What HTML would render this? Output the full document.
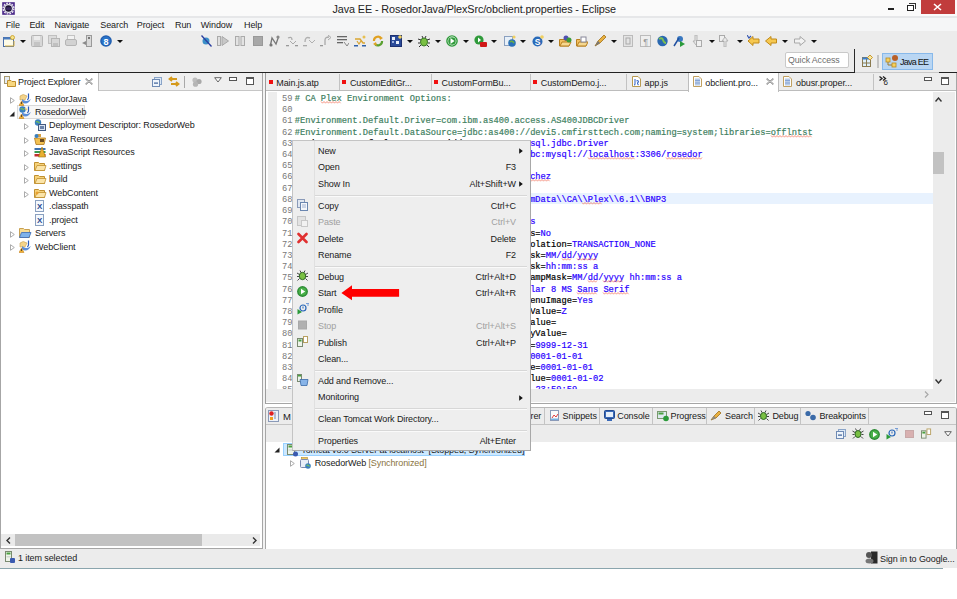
<!DOCTYPE html>
<html><head><meta charset="utf-8">
<style>
*{margin:0;padding:0;box-sizing:border-box}
html,body{width:957px;height:599px;overflow:hidden;background:#fff}
body{position:relative;font-family:"Liberation Sans",sans-serif;font-size:9px;letter-spacing:-0.1px;color:#1a1a1a}
.a{position:absolute}
.t{position:absolute;white-space:pre;line-height:1}
#title{left:0;top:0;width:957px;height:16px;background:#fafafa}
#menubar{left:0;top:16px;width:957px;height:15px;background:#f5f6f7}
#toolbar{left:0;top:31px;width:957px;height:41px;background:#ececec}
.code{font-family:"Liberation Mono",monospace;font-size:8.72px;letter-spacing:0;-webkit-text-stroke:0.2px}
</style></head><body>
<!-- TITLE -->
<div id="title" class="a">
  <svg class="a" style="left:1.5px;top:1.5px" width="13" height="13" viewBox="0 0 13 13"><rect x="0.2" y="0.2" width="12.6" height="12.6" fill="#4b2a8a"/><circle cx="6.5" cy="6.5" r="5.4" fill="none" stroke="#ecebf0" stroke-width="1.4" stroke-dasharray="1.8 1"/><circle cx="6.5" cy="6.5" r="4.5" fill="#ecebf0"/><circle cx="6.5" cy="6.5" r="3.3" fill="#1c1434"/><path d="M4.2 6H8.8M4.2 7.2H8.8" stroke="#6a4aa8" stroke-width="0.6"/></svg>
  <div class="t" style="left:332.5px;top:4px;font-size:10.8px;color:#222">Java EE - RosedorJava/PlexSrc/obclient.properties - Eclipse</div>
  <div class="a" style="left:888px;top:8px;width:6px;height:2px;background:#222"></div>
  <div class="a" style="left:909px;top:3px;width:7px;height:6px;border:1.5px solid #333;border-left:none;border-bottom:none"></div>
  <div class="a" style="left:907px;top:5px;width:7px;height:6px;border:1.5px solid #222;background:#fff"></div>
  <div class="a" style="left:921px;top:0;width:34px;height:14px;background:#c13c3c"></div>
  <svg class="a" style="left:933px;top:3px" width="9" height="8"><path d="M1 1L8 7M8 1L1 7" stroke="#fff" stroke-width="1.6"/></svg>
</div>
<div class="a" style="left:0;top:16px;width:957px;height:1.5px;background:#e6e7e9;z-index:2"></div>
<!-- MENUBAR -->
<div id="menubar" class="a">
  <div class="t" style="left:5.7px;top:5px">File</div>
  <div class="t" style="left:29.4px;top:5px">Edit</div>
  <div class="t" style="left:54.5px;top:5px">Navigate</div>
  <div class="t" style="left:100.3px;top:5px">Search</div>
  <div class="t" style="left:136.8px;top:5px">Project</div>
  <div class="t" style="left:175px;top:5px">Run</div>
  <div class="t" style="left:200.7px;top:5px">Window</div>
  <div class="t" style="left:244px;top:5px">Help</div>
</div>
<!-- TOOLBAR -->
<div id="toolbar" class="a"></div>
<svg class="a" style="left:3px;top:35px" width="12" height="12" viewBox="0 0 12 12"><rect x="0.5" y="2.5" width="10" height="9" fill="#fdfbe8" stroke="#4a6ea8"/><rect x="0.5" y="2.5" width="10" height="2" fill="#4a7cc0"/><path d="M2 11H11V6" stroke="#d8b040" fill="none"/><circle cx="9.5" cy="2.5" r="2" fill="#f6e48a" stroke="#c89a20" stroke-width="0.8"/></svg>
<div class="a" style="left:20px;top:40px;width:0;height:0;border-left:3px solid transparent;border-right:3px solid transparent;border-top:3px solid #111"></div>
<svg class="a" style="left:31px;top:35px" width="12" height="12" viewBox="0 0 12 12"><rect x="0.5" y="0.5" width="11" height="11" rx="1" fill="#d7d7d7" stroke="#b5b5b5"/><rect x="3" y="1" width="6" height="4" fill="#ececec"/><rect x="3" y="7" width="6" height="4" fill="#c4c4c4"/></svg>
<svg class="a" style="left:48px;top:35px" width="12" height="12" viewBox="0 0 12 12"><rect x="0.5" y="0.5" width="8" height="8" fill="#dcdcdc" stroke="#c0c0c0"/><rect x="3.5" y="3.5" width="8" height="8" fill="#d7d7d7" stroke="#b5b5b5"/><rect x="5" y="8" width="5" height="3" fill="#c0c0c0"/></svg>
<svg class="a" style="left:65px;top:35px" width="12" height="12" viewBox="0 0 12 12"><rect x="2.5" y="0.5" width="7" height="5" fill="#f2f2f2" stroke="#c3c3c3"/><rect x="0.5" y="4.5" width="11" height="6" rx="1.5" fill="#d2d2d2" stroke="#b5b5b5"/></svg>
<svg class="a" style="left:82px;top:35px" width="10" height="12" viewBox="0 0 10 12"><rect x="4.5" y="0.5" width="5" height="11" fill="#d9d9d9" stroke="#9a9a9a"/><path d="M0 8L4 6V10Z" fill="#8a8a8a"/><rect x="6" y="2" width="2" height="2" fill="#777"/></svg>
<svg class="a" style="left:100px;top:35px" width="12" height="12" viewBox="0 0 12 12"><circle cx="6" cy="6" r="5.8" fill="#1f5cad"/><circle cx="6" cy="6" r="4.5" fill="#2a73c8"/><text x="6" y="9.5" font-size="9" text-anchor="middle" fill="#fff" font-family="Liberation Sans" font-weight="bold">8</text></svg>
<div class="a" style="left:117px;top:40px;width:0;height:0;border-left:3px solid transparent;border-right:3px solid transparent;border-top:3px solid #111"></div>
<svg class="a" style="left:201px;top:35px" width="11" height="12" viewBox="0 0 11 12"><circle cx="5" cy="6" r="3.5" fill="#3a8fc8"/><path d="M0.5 0.5L10.5 11.5" stroke="#2a3ea0" stroke-width="1.3"/></svg>
<svg class="a" style="left:217px;top:35px" width="12" height="12" viewBox="0 0 12 12"><rect x="0.5" y="1.5" width="3" height="9" fill="#e0e0e0" stroke="#aaa"/><path d="M5 1.5L11.5 6L5 10.5Z" fill="#c8c8c8" stroke="#a8a8a8"/></svg>
<svg class="a" style="left:235px;top:35px" width="10" height="12" viewBox="0 0 10 12"><rect x="0.5" y="1.5" width="3.5" height="9" fill="#e3e3e3" stroke="#aaa"/><rect x="6" y="1.5" width="3.5" height="9" fill="#e3e3e3" stroke="#aaa"/></svg>
<svg class="a" style="left:253px;top:35px" width="10" height="12" viewBox="0 0 10 12"><rect x="0.5" y="1.5" width="9" height="9" fill="#a8a8a8" stroke="#999"/></svg>
<svg class="a" style="left:269px;top:35px" width="11" height="12" viewBox="0 0 11 12"><path d="M1.5 10L3 3L7 9L9.5 2" stroke="#777" stroke-width="1.3" fill="none"/><circle cx="2" cy="10" r="1.6" fill="#777"/><circle cx="9" cy="2" r="1.6" fill="#888"/></svg>
<svg class="a" style="left:286px;top:35px" width="12" height="12" viewBox="0 0 12 12"><path d="M2 3Q6 1 6 5" stroke="#aaa" fill="none" stroke-width="1.2"/><path d="M4 6L7 9L10 6" stroke="#aaa" fill="none"/><rect x="0" y="10" width="3" height="1.3" fill="#999"/><rect x="9" y="10" width="3" height="1.3" fill="#999"/></svg>
<svg class="a" style="left:303px;top:35px" width="12" height="12" viewBox="0 0 12 12"><path d="M2 7Q2 1 7 3" stroke="#b0b0b0" fill="none" stroke-width="1.4"/><path d="M6 5L9 8L12 5" stroke="#b0b0b0" fill="none"/><rect x="0" y="10" width="4" height="1.3" fill="#aaa"/></svg>
<svg class="a" style="left:320px;top:35px" width="12" height="12" viewBox="0 0 12 12"><rect x="0" y="10" width="3" height="1.3" fill="#999"/><path d="M5 10V5Q5 2 9 2" stroke="#aaa" fill="none" stroke-width="1.3"/><path d="M8 0L11 2.5L8 5" stroke="#aaa" fill="none"/></svg>
<svg class="a" style="left:337px;top:35px" width="12" height="12" viewBox="0 0 12 12"><rect x="0" y="1" width="10" height="1.3" fill="#666"/><rect x="0" y="4" width="10" height="1.3" fill="#666"/><rect x="0" y="7" width="6" height="1.3" fill="#666"/><path d="M7 7L10 11L12 8" stroke="#888" fill="none"/></svg>
<svg class="a" style="left:354px;top:35px" width="12" height="12" viewBox="0 0 12 12"><path d="M1 4H6L9 8H11" stroke="#d9a530" fill="none" stroke-width="1.4"/><path d="M3 6L5 9L7 6" stroke="#d9a530" fill="none" stroke-width="1.2"/><rect x="0" y="10" width="4" height="1.5" fill="#3060a8"/><rect x="8" y="10" width="4" height="1.5" fill="#3060a8"/><circle cx="10" cy="2" r="1.5" fill="#e8c050"/></svg>
<svg class="a" style="left:372px;top:35px" width="12" height="12" viewBox="0 0 12 12"><path d="M2 6A4 4 0 0 1 9 3" stroke="#e0a020" stroke-width="2.2" fill="none"/><path d="M10 6A4 4 0 0 1 3 9" stroke="#5aa030" stroke-width="2.2" fill="none"/><path d="M7 1L11 3L8 5Z" fill="#e0a020"/><path d="M5 11L1 9L4 7Z" fill="#e0a020"/></svg>
<svg class="a" style="left:390px;top:35px" width="12" height="12" viewBox="0 0 12 12"><rect x="0.5" y="0.5" width="11" height="11" fill="#2a4a98" stroke="#1c3070"/><rect x="2" y="2" width="3" height="3" fill="#e8eef8"/><rect x="6" y="6" width="3" height="3" fill="#e8eef8"/><rect x="2" y="6" width="2" height="2" fill="#9ab0e0"/><circle cx="10" cy="2" r="1.8" fill="#f0d060"/></svg>
<div class="a" style="left:407px;top:40px;width:0;height:0;border-left:3px solid transparent;border-right:3px solid transparent;border-top:3px solid #111"></div>
<svg class="a" style="left:418px;top:35px" width="12" height="12" viewBox="0 0 12 12"><ellipse cx="6" cy="7" rx="3.5" ry="4" fill="#7ac043" stroke="#3a7a28"/><path d="M0 4L3 5M12 4L9 5M0 8H2M12 8H10M1 12L3 10M11 12L9 10M4 1L5 3M8 1L7 3" stroke="#333" stroke-width="1"/></svg>
<div class="a" style="left:435px;top:40px;width:0;height:0;border-left:3px solid transparent;border-right:3px solid transparent;border-top:3px solid #111"></div>
<svg class="a" style="left:446px;top:35px" width="12" height="12" viewBox="0 0 12 12"><circle cx="6" cy="6" r="5.8" fill="#2f9a3a"/><circle cx="6" cy="6" r="4.4" fill="#fff"/><circle cx="6" cy="6" r="3.8" fill="#2f9a3a"/><path d="M4.5 3L8.5 6L4.5 9Z" fill="#fff"/></svg>
<div class="a" style="left:463px;top:40px;width:0;height:0;border-left:3px solid transparent;border-right:3px solid transparent;border-top:3px solid #111"></div>
<svg class="a" style="left:474px;top:35px" width="13" height="12" viewBox="0 0 13 12"><circle cx="5" cy="5" r="4.6" fill="#2f9a3a"/><path d="M4 2.5L7 5L4 7.5Z" fill="#fff"/><rect x="6" y="7" width="7" height="5" rx="1" fill="#d01818"/></svg>
<div class="a" style="left:491px;top:40px;width:0;height:0;border-left:3px solid transparent;border-right:3px solid transparent;border-top:3px solid #111"></div>
<svg class="a" style="left:504px;top:35px" width="12" height="12" viewBox="0 0 12 12"><rect x="0.5" y="1.5" width="8" height="9" fill="#e8f0f8" stroke="#8aa0c0"/><circle cx="8" cy="8" r="3.8" fill="#2a70b8"/><path d="M6 7Q8 5 10 8" stroke="#6ab040" stroke-width="1.5" fill="none"/><circle cx="10" cy="2" r="1.6" fill="#f0d060"/></svg>
<div class="a" style="left:520px;top:40px;width:0;height:0;border-left:3px solid transparent;border-right:3px solid transparent;border-top:3px solid #111"></div>
<svg class="a" style="left:532px;top:35px" width="12" height="12" viewBox="0 0 12 12"><circle cx="5.5" cy="6.5" r="5" fill="#2a6ab8"/><text x="5.5" y="9.8" font-size="8.5" text-anchor="middle" fill="#fff" font-family="Liberation Sans" font-weight="bold">S</text><circle cx="10" cy="2" r="1.8" fill="#f0d060"/></svg>
<div class="a" style="left:548px;top:40px;width:0;height:0;border-left:3px solid transparent;border-right:3px solid transparent;border-top:3px solid #111"></div>
<svg class="a" style="left:559px;top:35px" width="13" height="12" viewBox="0 0 13 12"><path d="M0.5 4.5H5L6 5.5H10V11H0.5Z" fill="#f2c060" stroke="#b88020"/><path d="M1 11L3 7H12L10 11Z" fill="#f6d890" stroke="#b88020"/><circle cx="7" cy="3" r="2.5" fill="#5050b0"/><circle cx="10" cy="5" r="2.5" fill="#3a9a3a"/></svg>
<svg class="a" style="left:576px;top:35px" width="12" height="12" viewBox="0 0 12 12"><path d="M0.5 4.5H4L5 5.5H10V11H0.5Z" fill="#f2c060" stroke="#b88020"/><path d="M1 11L3 7H12L10 11Z" fill="#f6d890" stroke="#b88020"/><rect x="5" y="2" width="5" height="5" fill="#fff" stroke="#889"/></svg>
<svg class="a" style="left:594px;top:35px" width="12" height="12" viewBox="0 0 12 12"><path d="M1 11L4 6L10 0L12 2L6 8Z" fill="#e8b040" stroke="#a07018" stroke-width="0.8"/><path d="M1 11L4 6L6 8Z" fill="#777"/></svg>
<div class="a" style="left:611px;top:40px;width:0;height:0;border-left:3px solid transparent;border-right:3px solid transparent;border-top:3px solid #111"></div>
<svg class="a" style="left:623px;top:35px" width="10" height="12" viewBox="0 0 10 12"><rect x="0.5" y="0.5" width="9" height="11" fill="#e4e4e4" stroke="#bbb"/><rect x="3" y="3" width="4" height="6" fill="none" stroke="#aaa"/></svg>
<svg class="a" style="left:640px;top:35px" width="11" height="12" viewBox="0 0 11 12"><rect x="0.5" y="0.5" width="10" height="11" fill="#eee" stroke="#bbb"/><text x="5.5" y="9.5" font-size="9" text-anchor="middle" fill="#999" font-family="Liberation Sans">¶</text></svg>
<svg class="a" style="left:657px;top:35px" width="11" height="12" viewBox="0 0 11 12"><circle cx="5.5" cy="6" r="5.2" fill="#2a68b0"/><path d="M2 4Q5 2 6 5T9 8" stroke="#7cc050" stroke-width="2" fill="none"/></svg>
<svg class="a" style="left:673px;top:35px" width="13" height="12" viewBox="0 0 13 12"><circle cx="7" cy="4" r="3" fill="#3a78c0"/><path d="M1 11L6 3" stroke="#2050a0" stroke-width="1.5"/><path d="M7 6L12 9L7 12Z" fill="#2a9a3a"/></svg>
<svg class="a" style="left:691px;top:35px" width="11" height="12" viewBox="0 0 11 12"><path d="M4 0V6H2L5 10L8 6H6V0Z" fill="#e8e8e8" stroke="#aaa" stroke-width="0.8"/><rect x="5.5" y="5.5" width="5" height="6" fill="#f0f0f0" stroke="#aaa"/></svg>
<div class="a" style="left:709px;top:40px;width:0;height:0;border-left:3px solid transparent;border-right:3px solid transparent;border-top:3px solid #111"></div>
<svg class="a" style="left:719px;top:35px" width="11" height="12" viewBox="0 0 11 12"><rect x="0.5" y="0.5" width="5" height="6" fill="#f0f0f0" stroke="#aaa"/><path d="M5 12V6H3L6 2L9 6H7V12Z" fill="#e8e8e8" stroke="#aaa" stroke-width="0.8"/></svg>
<div class="a" style="left:737px;top:40px;width:0;height:0;border-left:3px solid transparent;border-right:3px solid transparent;border-top:3px solid #111"></div>
<svg class="a" style="left:747px;top:35px" width="13" height="12" viewBox="0 0 13 12"><path d="M1 6L6 1.5V4H12V8H6V10.5Z" fill="#f6c850" stroke="#c08a18"/><path d="M0 0L2 3L4 1" stroke="#3a5ab0" stroke-width="1.2" fill="none"/></svg>
<svg class="a" style="left:765px;top:35px" width="12" height="12" viewBox="0 0 12 12"><path d="M0.5 6L6 1.5V4H11.5V8H6V10.5Z" fill="#f6c850" stroke="#c08a18"/></svg>
<div class="a" style="left:782px;top:40px;width:0;height:0;border-left:3px solid transparent;border-right:3px solid transparent;border-top:3px solid #111"></div>
<svg class="a" style="left:794px;top:35px" width="12" height="12" viewBox="0 0 12 12"><path d="M11.5 6L6 1.5V4H0.5V8H6V10.5Z" fill="#f2f2f2" stroke="#a8a8a8"/></svg>
<div class="a" style="left:811px;top:40px;width:0;height:0;border-left:3px solid transparent;border-right:3px solid transparent;border-top:3px solid #111"></div>
<div class="a" style="left:785px;top:52px;width:64px;height:16px;background:#fff;border:1px solid #c9c9c9;border-radius:2px"></div>
<div class="t" style="left:788px;top:56px;color:#6d6d6d;font-size:8.8px">Quick Access</div>
<div class="a" style="left:854px;top:49px;width:1.3px;height:24px;background:#2a2a2a"></div>
<svg class="a" style="left:862px;top:55px" width="11" height="12" viewBox="0 0 11 12"><rect x="0.5" y="2.5" width="8" height="9" fill="#dff0fa" stroke="#8a7a50"/><rect x="0.5" y="2.5" width="8" height="2" fill="#3a80d0"/><path d="M4.5 4V11.5M0.5 8H8.5" stroke="#8a7a50"/><path d="M8 0L10.5 2.5L8 5L5.5 2.5Z" fill="#f8e8a0" stroke="#c89830"/></svg>
<div class="a" style="left:877px;top:55px;width:2px;height:13px;background:#c4c4c4"></div>
<div class="a" style="left:882px;top:53px;width:51px;height:17px;background:#b9d6f3;border:1px solid #88b9ea"></div>
<svg class="a" style="left:885px;top:55px" width="14" height="13" viewBox="0 0 14 13"><rect x="1" y="3" width="4" height="4" fill="#f5d060" stroke="#b88a20" stroke-width="0.8"/><rect x="7" y="8" width="4" height="4" fill="#f5d060" stroke="#b88a20" stroke-width="0.8"/><path d="M3 7V10H7" stroke="#9a7a30" fill="none"/><circle cx="10" cy="3" r="3" fill="#b8602a"/></svg>
<div class="t" style="left:900px;top:57.5px;color:#111;letter-spacing:-0.75px;font-size:9px">Java EE</div>

<div class="a" style="left:0;top:73px;width:263px;height:476px;background:#fff;border-left:1px solid #a6a6a6;border-right:1px solid #a6a6a6;border-bottom:1px solid #a6a6a6"></div>
<div class="a" style="left:1px;top:73px;width:261px;height:18px;background:#efefef;border-bottom:1px solid #c6c6c6"></div>
<div class="a" style="left:1px;top:73px;width:98px;height:18px;background:#fff;border-right:1px solid #bdbdbd"></div>
<svg class="a" style="left:4px;top:76px" width="12" height="11" viewBox="0 0 12 11"><rect x="0.5" y="0.5" width="5" height="7" fill="#e6ecf5" stroke="#a89a70"/><path d="M3.5 4.5H7L8 5.5H11.5V10.5H3.5Z" fill="#f8d880" stroke="#c09030"/></svg>
<div class="t" style="left:18px;top:78px">Project Explorer</div>
<svg class="a" style="left:85px;top:78px" width="8" height="7" viewBox="0 0 8 7"><path d="M1 0.5L4 3L7 0.5L7.5 1L5 3.5L7.5 6L7 6.5L4 4L1 6.5L0.5 6L3 3.5L0.5 1Z" fill="none" stroke="#777" stroke-width="0.8"/></svg>
<svg class="a" style="left:152px;top:77px" width="10" height="10" viewBox="0 0 10 10"><rect x="2.5" y="0.5" width="7" height="7" fill="#dbe8f6" stroke="#8aa4c8"/><rect x="0.5" y="2.5" width="7" height="7" fill="#eef4fb" stroke="#6e8ab4"/><rect x="2" y="5.5" width="4" height="1.2" fill="#3b5f98"/></svg>
<svg class="a" style="left:168px;top:76px" width="12" height="11" viewBox="0 0 12 11"><path d="M9 3H2M4 1L1.5 3L4 5" stroke="#d59a1c" stroke-width="1.8" fill="none"/><path d="M3 8H10M8 6L10.5 8L8 10" stroke="#d59a1c" stroke-width="1.8" fill="none"/></svg>
<div class="a" style="left:184px;top:76px;width:1px;height:12px;background:#a8a8a8"></div>
<svg class="a" style="left:192px;top:77px" width="10" height="10" viewBox="0 0 10 10"><circle cx="3" cy="3" r="2.6" fill="#bdbdbd"/><circle cx="7" cy="4.5" r="2.6" fill="#a9a9a9"/><circle cx="3.5" cy="7.2" r="2.6" fill="#b5b5b5"/></svg>
<svg class="a" style="left:214px;top:77px" width="8" height="6" viewBox="0 0 8 6"><path d="M0.7 0.7H7.3L4 5Z" fill="#fff" stroke="#555" stroke-width="0.9"/></svg>
<div class="a" style="left:229px;top:77px;width:8px;height:3.5px;border:1px solid #555;background:#fff"></div>
<div class="a" style="left:246px;top:77px;width:8px;height:8px;border:1px solid #555;border-top-width:2px;background:#fff"></div>
<div class="a" style="left:17px;top:105px;width:68px;height:14px;border:1px solid #d9d9d9;background:#f7f7f7"></div>
<svg class="a" style="left:10px;top:96.50px" width="5" height="7" viewBox="0 0 5 7"><path d="M0.5 0.7L4.3 3.5L0.5 6.3Z" fill="#fff" stroke="#a2a2a2" stroke-width="0.9"/></svg>
<svg class="a" style="left:19.0px;top:92.50px" width="13" height="13" viewBox="0 0 13 13"><path d="M1 3Q4 0 8 3L6 7H1Z" fill="#f4d48a" stroke="#c8a050" stroke-width="0.6"/><path d="M3 6Q7 10 12 6L10 9Q6 12 3 9Z" fill="#5d8fd8"/><path d="M9.5 0.5V5Q9.5 6.5 8 6.5" stroke="#2a5ab8" stroke-width="1.2" fill="none"/><path d="M2.5 8L5 12.5H0Z" fill="#f0b030" stroke="#c07810" stroke-width="0.5"/><rect x="2.1" y="9" width="0.8" height="2" fill="#333"/></svg>
<div class="t" style="left:35px;top:94.55px">RosedorJava</div>
<svg class="a" style="left:9px;top:110.95px" width="6" height="6" viewBox="0 0 6 6"><path d="M5.5 0.5V5.5H0.5Z" fill="#222"/></svg>
<svg class="a" style="left:19.0px;top:105.95px" width="13" height="13" viewBox="0 0 13 13"><circle cx="3.5" cy="3.5" r="3.2" fill="#3a80c0"/><path d="M1.5 3Q3 2 5 4" stroke="#7ac050" stroke-width="1.3" fill="none"/><path d="M3 6Q7 10 12 6L10 9Q6 12 3 9Z" fill="#5d8fd8"/><path d="M9.5 0.5V5Q9.5 6.5 8 6.5" stroke="#2a5ab8" stroke-width="1.2" fill="none"/><path d="M6 2L8 4" stroke="#f0d070" stroke-width="1.5"/><path d="M2.5 8L5 12.5H0Z" fill="#f0b030" stroke="#c07810" stroke-width="0.5"/><rect x="2.1" y="9" width="0.8" height="2" fill="#333"/></svg>
<div class="t" style="left:35px;top:108.00px">RosedorWeb</div>
<svg class="a" style="left:24px;top:123.40px" width="5" height="7" viewBox="0 0 5 7"><path d="M0.5 0.7L4.3 3.5L0.5 6.3Z" fill="#fff" stroke="#a2a2a2" stroke-width="0.9"/></svg>
<svg class="a" style="left:33.5px;top:119.40px" width="13" height="13" viewBox="0 0 13 13"><circle cx="4" cy="3.5" r="3.2" fill="#3a80c0"/><path d="M2 3Q3.5 2 5.5 4" stroke="#7ac050" stroke-width="1.3" fill="none"/><rect x="4.5" y="5.5" width="7" height="6" fill="#d8e4f4" stroke="#445a80"/><rect x="6" y="7" width="4" height="3" fill="#6a82aa"/></svg>
<div class="t" style="left:49px;top:121.45px">Deployment Descriptor: RosedorWeb</div>
<svg class="a" style="left:24px;top:136.85px" width="5" height="7" viewBox="0 0 5 7"><path d="M0.5 0.7L4.3 3.5L0.5 6.3Z" fill="#fff" stroke="#a2a2a2" stroke-width="0.9"/></svg>
<svg class="a" style="left:33.5px;top:132.85px" width="13" height="13" viewBox="0 0 13 13"><rect x="3" y="1" width="4" height="3" fill="#d8a040"/><path d="M0.5 5H11.5L10 11.5H2Z" fill="#f2c050" stroke="#b07820" stroke-width="0.8"/><rect x="6" y="6" width="4" height="3" fill="#6a4a20"/><circle cx="2.5" cy="3" r="2" fill="#3a80c0"/></svg>
<div class="t" style="left:49px;top:134.90px">Java Resources</div>
<svg class="a" style="left:24px;top:150.30px" width="5" height="7" viewBox="0 0 5 7"><path d="M0.5 0.7L4.3 3.5L0.5 6.3Z" fill="#fff" stroke="#a2a2a2" stroke-width="0.9"/></svg>
<svg class="a" style="left:33.5px;top:146.30px" width="13" height="13" viewBox="0 0 13 13"><rect x="0.5" y="2" width="11" height="2" fill="#3a70b0"/><rect x="0.5" y="5" width="11" height="2" fill="#3a9a50"/><rect x="0.5" y="8" width="11" height="2.5" fill="#c03030"/><path d="M8 1L11.5 11H4.5Z" fill="#e8b030" stroke="#a07010" stroke-width="0.6"/></svg>
<div class="t" style="left:49px;top:148.35px">JavaScript Resources</div>
<svg class="a" style="left:24px;top:163.75px" width="5" height="7" viewBox="0 0 5 7"><path d="M0.5 0.7L4.3 3.5L0.5 6.3Z" fill="#fff" stroke="#a2a2a2" stroke-width="0.9"/></svg>
<svg class="a" style="left:33.5px;top:159.75px" width="13" height="13" viewBox="0 0 13 13"><path d="M0.5 2.5H4.5L5.5 3.5H10.5V10.5H0.5Z" fill="#f6d27a" stroke="#c09030"/><path d="M1 10.5L3 5.5H12L10.5 10.5Z" fill="#fbe4a8" stroke="#c09030" stroke-width="0.8"/></svg>
<div class="t" style="left:49px;top:161.80px">.settings</div>
<svg class="a" style="left:24px;top:177.20px" width="5" height="7" viewBox="0 0 5 7"><path d="M0.5 0.7L4.3 3.5L0.5 6.3Z" fill="#fff" stroke="#a2a2a2" stroke-width="0.9"/></svg>
<svg class="a" style="left:33.5px;top:173.20px" width="13" height="13" viewBox="0 0 13 13"><path d="M0.5 2.5H4.5L5.5 3.5H10.5V10.5H0.5Z" fill="#f6d27a" stroke="#c09030"/><path d="M1 10.5L3 5.5H12L10.5 10.5Z" fill="#fbe4a8" stroke="#c09030" stroke-width="0.8"/></svg>
<div class="t" style="left:49px;top:175.25px">build</div>
<svg class="a" style="left:24px;top:190.65px" width="5" height="7" viewBox="0 0 5 7"><path d="M0.5 0.7L4.3 3.5L0.5 6.3Z" fill="#fff" stroke="#a2a2a2" stroke-width="0.9"/></svg>
<svg class="a" style="left:33.5px;top:186.65px" width="13" height="13" viewBox="0 0 13 13"><path d="M0.5 2.5H4.5L5.5 3.5H10.5V10.5H0.5Z" fill="#f6d27a" stroke="#c09030"/><path d="M1 10.5L3 5.5H12L10.5 10.5Z" fill="#fbe4a8" stroke="#c09030" stroke-width="0.8"/><circle cx="3" cy="6" r="1.5" fill="#e8a030"/></svg>
<div class="t" style="left:49px;top:188.70px">WebContent</div>
<svg class="a" style="left:33.5px;top:200.10px" width="13" height="13" viewBox="0 0 13 13"><rect x="1.5" y="0.5" width="8" height="11" fill="#f4f8fc" stroke="#8aa0c0"/><text x="5.5" y="9" font-size="8" text-anchor="middle" fill="#2a4a90" font-family="Liberation Sans" font-weight="bold">X</text></svg>
<div class="t" style="left:49px;top:202.15px">.classpath</div>
<svg class="a" style="left:33.5px;top:213.55px" width="13" height="13" viewBox="0 0 13 13"><rect x="1.5" y="0.5" width="8" height="11" fill="#f4f8fc" stroke="#8aa0c0"/><text x="5.5" y="9" font-size="8" text-anchor="middle" fill="#2a4a90" font-family="Liberation Sans" font-weight="bold">X</text></svg>
<div class="t" style="left:49px;top:215.60px">.project</div>
<svg class="a" style="left:10px;top:231.00px" width="5" height="7" viewBox="0 0 5 7"><path d="M0.5 0.7L4.3 3.5L0.5 6.3Z" fill="#fff" stroke="#a2a2a2" stroke-width="0.9"/></svg>
<svg class="a" style="left:19.0px;top:227.00px" width="13" height="13" viewBox="0 0 13 13"><path d="M0.5 1.5H4.5L5.5 2.5H10.5V10.5H0.5Z" fill="#f8dc94" stroke="#c8a050"/><path d="M0.5 10.5L2.5 5.5H12L10 10.5Z" fill="#7fb2ea" stroke="#3a6ab8" stroke-width="0.8"/></svg>
<div class="t" style="left:35px;top:229.05px">Servers</div>
<svg class="a" style="left:10px;top:244.45px" width="5" height="7" viewBox="0 0 5 7"><path d="M0.5 0.7L4.3 3.5L0.5 6.3Z" fill="#fff" stroke="#a2a2a2" stroke-width="0.9"/></svg>
<svg class="a" style="left:19.0px;top:240.45px" width="13" height="13" viewBox="0 0 13 13"><path d="M1 3Q4 0 8 3L6 7H1Z" fill="#f4d48a" stroke="#c8a050" stroke-width="0.6"/><path d="M3 6Q7 10 12 6L10 9Q6 12 3 9Z" fill="#5d8fd8"/><path d="M9.5 0.5V5Q9.5 6.5 8 6.5" stroke="#2a5ab8" stroke-width="1.2" fill="none"/><path d="M2.5 8L5 12.5H0Z" fill="#f0b030" stroke="#c07810" stroke-width="0.5"/><rect x="2.1" y="9" width="0.8" height="2" fill="#333"/></svg>
<div class="t" style="left:35px;top:242.50px">WebClient</div>

<div class="a" style="left:1px;top:534px;width:259px;height:12px;background:#eaeaea"></div>
<div class="a" style="left:15px;top:534px;width:187px;height:12px;background:#c2c2c2"></div>
<svg class="a" style="left:6px;top:537px" width="5" height="7" viewBox="0 0 5 7"><path d="M4 0.5L1 3.5L4 6.5" stroke="#333" stroke-width="1.4" fill="none"/></svg>
<svg class="a" style="left:252px;top:537px" width="5" height="7" viewBox="0 0 5 7"><path d="M1 0.5L4 3.5L1 6.5" stroke="#333" stroke-width="1.4" fill="none"/></svg>
<div class="a" style="left:265px;top:73px;width:692px;height:331px;background:#fff;border-left:1px solid #9d9d9d;border-right:1px solid #a6a6a6;border-bottom:1px solid #a6a6a6"></div>
<div class="a" style="left:263px;top:73px;width:2px;height:476px;background:#f2f2f2"></div>
<div class="a" style="left:266px;top:73px;width:690px;height:18px;background:#ededed;border-bottom:1px solid #bcbcbc"></div>
<div class="a" style="left:339px;top:74px;width:1px;height:16px;background:#c2c2c2"></div>
<div class="a" style="left:268.5px;top:79.5px;width:4.5px;height:4.5px;background:#f01010"></div>
<div class="t" style="left:276.3px;top:78.5px">Main.js.atp</div>
<div class="a" style="left:431px;top:74px;width:1px;height:16px;background:#c2c2c2"></div>
<div class="a" style="left:341.5px;top:79.5px;width:4.5px;height:4.5px;background:#f01010"></div>
<div class="t" style="left:349.9px;top:78.5px">CustomEditGr...</div>
<div class="a" style="left:530px;top:74px;width:1px;height:16px;background:#c2c2c2"></div>
<div class="a" style="left:433.5px;top:79.5px;width:4.5px;height:4.5px;background:#f01010"></div>
<div class="t" style="left:441.6px;top:78.5px">CustomFormBu...</div>
<div class="a" style="left:626px;top:74px;width:1px;height:16px;background:#c2c2c2"></div>
<div class="a" style="left:532.5px;top:79.5px;width:4.5px;height:4.5px;background:#f01010"></div>
<div class="t" style="left:540.8px;top:78.5px">CustomDemo.j...</div>
<div class="a" style="left:688px;top:74px;width:1px;height:16px;background:#c2c2c2"></div>
<svg class="a" style="left:632px;top:76px" width="9" height="11" viewBox="0 0 9 11"><path d="M0.5 0.5H6L8.5 3V10.5H0.5Z" fill="#fff" stroke="#b89a50"/><path d="M3 3V8Q3 9 2 9M4.5 5Q6.5 4 6.5 6Q4.5 7 6.5 9" stroke="#3a6ac8" stroke-width="1.1" fill="none"/></svg>
<div class="t" style="left:644.5px;top:78.5px">app.js</div>
<div class="a" style="left:688px;top:73px;width:91px;height:19px;background:#fff;border-right:1px solid #bdbdbd;border-left:1px solid #bdbdbd"></div>
<svg class="a" style="left:692.5px;top:76px" width="9" height="11" viewBox="0 0 9 11"><path d="M0.5 0.5H6L8.5 3V10.5H0.5Z" fill="#fdfdfd" stroke="#c0a060"/><rect x="2" y="2.5" width="5" height="7" fill="#b8cce8"/><path d="M2 4.5H7M2 7H7" stroke="#7a9ad0" stroke-width="0.8"/></svg>
<div class="t" style="left:705.3px;top:78.5px">obclient.pro...</div>
<div class="a" style="left:873px;top:74px;width:1px;height:16px;background:#c2c2c2"></div>
<svg class="a" style="left:782.5px;top:76px" width="9" height="11" viewBox="0 0 9 11"><path d="M0.5 0.5H6L8.5 3V10.5H0.5Z" fill="#fdfdfd" stroke="#c0a060"/><rect x="2" y="2.5" width="5" height="7" fill="#b8cce8"/><path d="M2 4.5H7M2 7H7" stroke="#7a9ad0" stroke-width="0.8"/></svg>
<div class="t" style="left:796px;top:78.5px">obusr.proper...</div>
<svg class="a" style="left:766px;top:78px" width="8" height="7" viewBox="0 0 8 7"><path d="M1 0.5L4 3L7 0.5L7.5 1L5 3.5L7.5 6L7 6.5L4 4L1 6.5L0.5 6L3 3.5L0.5 1Z" fill="none" stroke="#777" stroke-width="0.8"/></svg>
<svg class="a" style="left:879px;top:76px" width="9" height="6" viewBox="0 0 9 6"><path d="M0.5 0.5L3 2.5L0.5 4.5M4 0.5L6.5 2.5L4 4.5" stroke="#222" stroke-width="1.3" fill="none"/></svg>
<div class="t" style="left:883.5px;top:79px;font-size:8px;color:#222">6</div>
<div class="a" style="left:924px;top:77px;width:8px;height:3.5px;border:1px solid #555;background:#fff"></div>
<div class="a" style="left:941px;top:77px;width:8px;height:8px;border:1px solid #555;border-top-width:2px;background:#fff"></div>
<div class="a" style="left:268px;top:92px;width:8.5px;height:297px;background:#ededed"></div>
<div class="a" style="left:933px;top:92px;width:22px;height:310px;background:#ececec"></div>
<div class="a" style="left:266px;top:389px;width:689px;height:13px;background:#ececec"></div>
<div class="a" style="left:933px;top:152px;width:11px;height:22px;background:#c2c2c2"></div>
<svg class="a" style="left:935px;top:97px" width="7" height="5" viewBox="0 0 7 5"><path d="M0.5 4.5L3.5 1L6.5 4.5" stroke="#333" stroke-width="1.4" fill="none"/></svg>
<svg class="a" style="left:935px;top:379px" width="7" height="5" viewBox="0 0 7 5"><path d="M0.5 0.5L3.5 4L6.5 0.5" stroke="#333" stroke-width="1.4" fill="none"/></svg>
<svg class="a" style="left:924px;top:391px" width="5" height="7" viewBox="0 0 5 7"><path d="M1 0.5L4 3.5L1 6.5" stroke="#a8a8a8" stroke-width="1.2" fill="none"/></svg>
<div class="a" style="left:294px;top:193px;width:639px;height:11px;background:#e8f2fe"></div>
<div class="a code" style="left:266px;top:91px;width:667px;height:298px;overflow:hidden">
<div class="t" style="left:0;top:3.00px;width:26.5px;text-align:right;color:#787878;-webkit-text-stroke:0;line-height:11.21px">59</div>
<div class="t" style="left:28.7px;top:3.00px;line-height:11.21px"><span style="color:#3f7f5f"># CA Plex Environment Options:</span></div>
<div class="t" style="left:0;top:14.21px;width:26.5px;text-align:right;color:#787878;-webkit-text-stroke:0;line-height:11.21px">60</div>
<div class="t" style="left:28.7px;top:14.21px;line-height:11.21px"></div>
<div class="t" style="left:0;top:25.42px;width:26.5px;text-align:right;color:#787878;-webkit-text-stroke:0;line-height:11.21px">61</div>
<div class="t" style="left:28.7px;top:25.42px;line-height:11.21px"><span style="color:#3f7f5f">#Environment.Default.Driver=com.ibm.as400.access.AS400JDBCDriver</span></div>
<div class="t" style="left:0;top:36.63px;width:26.5px;text-align:right;color:#787878;-webkit-text-stroke:0;line-height:11.21px">62</div>
<div class="t" style="left:28.7px;top:36.63px;line-height:11.21px"><span style="color:#3f7f5f">#Environment.Default.DataSource=jdbc:as400://devi5.cmfirsttech.com;naming=system;libraries=offlntst</span></div>
<div class="t" style="left:0;top:47.84px;width:26.5px;text-align:right;color:#787878;-webkit-text-stroke:0;line-height:11.21px">63</div>
<div class="t" style="left:28.7px;top:47.84px;line-height:11.21px"><span style="color:#000">Environment.Default.Foo.Bar.Hidden.Key.Name.x</span><span style="color:#2a00ff">sql.jdbc.Driver</span></div>
<div class="t" style="left:0;top:59.05px;width:26.5px;text-align:right;color:#787878;-webkit-text-stroke:0;line-height:11.21px">64</div>
<div class="t" style="left:28.7px;top:59.05px;line-height:11.21px"><span style="color:#000">Environment.Default.Foo.Bar.Hidden.Key.Name.x</span><span style="color:#2a00ff">bc:mysql://localhost:3306/rosedor</span></div>
<div class="t" style="left:0;top:70.26px;width:26.5px;text-align:right;color:#787878;-webkit-text-stroke:0;line-height:11.21px">65</div>
<div class="t" style="left:28.7px;top:70.26px;line-height:11.21px"></div>
<div class="t" style="left:0;top:81.47px;width:26.5px;text-align:right;color:#787878;-webkit-text-stroke:0;line-height:11.21px">66</div>
<div class="t" style="left:28.7px;top:81.47px;line-height:11.21px"><span style="color:#000">Environment.Default.Foo.Bar.Hidden.Key.Name.x</span><span style="color:#2a00ff">chez</span></div>
<div class="t" style="left:0;top:92.68px;width:26.5px;text-align:right;color:#787878;-webkit-text-stroke:0;line-height:11.21px">67</div>
<div class="t" style="left:28.7px;top:92.68px;line-height:11.21px"></div>
<div class="t" style="left:0;top:103.89px;width:26.5px;text-align:right;color:#787878;-webkit-text-stroke:0;line-height:11.21px">68</div>
<div class="t" style="left:28.7px;top:103.89px;line-height:11.21px"><span style="color:#000">Environment.Default.Foo.Bar.Hidden.Key.Name.x</span><span style="color:#2a00ff">mData\\CA\\Plex\\6.1\\BNP3</span></div>
<div class="t" style="left:0;top:115.10px;width:26.5px;text-align:right;color:#787878;-webkit-text-stroke:0;line-height:11.21px">69</div>
<div class="t" style="left:28.7px;top:115.10px;line-height:11.21px"></div>
<div class="t" style="left:0;top:126.31px;width:26.5px;text-align:right;color:#787878;-webkit-text-stroke:0;line-height:11.21px">70</div>
<div class="t" style="left:28.7px;top:126.31px;line-height:11.21px"><span style="color:#000">Environment.Default.Foo.Bar.Hidden.Key.Name.x</span><span style="color:#2a00ff">s</span></div>
<div class="t" style="left:0;top:137.52px;width:26.5px;text-align:right;color:#787878;-webkit-text-stroke:0;line-height:11.21px">71</div>
<div class="t" style="left:28.7px;top:137.52px;line-height:11.21px"><span style="color:#000">Environment.Default.Foo.Bar.Hidden.Key.Name.xs=</span><span style="color:#2a00ff">No</span></div>
<div class="t" style="left:0;top:148.73px;width:26.5px;text-align:right;color:#787878;-webkit-text-stroke:0;line-height:11.21px">72</div>
<div class="t" style="left:28.7px;top:148.73px;line-height:11.21px"><span style="color:#000">Environment.Default.Foo.Bar.Hidden.Key.Name.xolation=</span><span style="color:#2a00ff">TRANSACTION_NONE</span></div>
<div class="t" style="left:0;top:159.94px;width:26.5px;text-align:right;color:#787878;-webkit-text-stroke:0;line-height:11.21px">73</div>
<div class="t" style="left:28.7px;top:159.94px;line-height:11.21px"><span style="color:#000">Environment.Default.Foo.Bar.Hidden.Key.Name.xsk=</span><span style="color:#2a00ff">MM/dd/yyyy</span></div>
<div class="t" style="left:0;top:171.15px;width:26.5px;text-align:right;color:#787878;-webkit-text-stroke:0;line-height:11.21px">74</div>
<div class="t" style="left:28.7px;top:171.15px;line-height:11.21px"><span style="color:#000">Environment.Default.Foo.Bar.Hidden.Key.Name.xsk=</span><span style="color:#2a00ff">hh:mm:ss a</span></div>
<div class="t" style="left:0;top:182.36px;width:26.5px;text-align:right;color:#787878;-webkit-text-stroke:0;line-height:11.21px">75</div>
<div class="t" style="left:28.7px;top:182.36px;line-height:11.21px"><span style="color:#000">Environment.Default.Foo.Bar.Hidden.Key.Name.xampMask=</span><span style="color:#2a00ff">MM/dd/yyyy hh:mm:ss a</span></div>
<div class="t" style="left:0;top:193.57px;width:26.5px;text-align:right;color:#787878;-webkit-text-stroke:0;line-height:11.21px">76</div>
<div class="t" style="left:28.7px;top:193.57px;line-height:11.21px"><span style="color:#000">Environment.Default.Foo.Bar.Hidden.Key.Name.x</span><span style="color:#2a00ff">lar 8 MS Sans Serif</span></div>
<div class="t" style="left:0;top:204.78px;width:26.5px;text-align:right;color:#787878;-webkit-text-stroke:0;line-height:11.21px">77</div>
<div class="t" style="left:28.7px;top:204.78px;line-height:11.21px"><span style="color:#000">Environment.Default.Foo.Bar.Hidden.Key.Name.xenuImage=</span><span style="color:#2a00ff">Yes</span></div>
<div class="t" style="left:0;top:215.99px;width:26.5px;text-align:right;color:#787878;-webkit-text-stroke:0;line-height:11.21px">78</div>
<div class="t" style="left:28.7px;top:215.99px;line-height:11.21px"><span style="color:#000">Environment.Default.Foo.Bar.Hidden.Key.Name.xValue=</span><span style="color:#2a00ff">Z</span></div>
<div class="t" style="left:0;top:227.20px;width:26.5px;text-align:right;color:#787878;-webkit-text-stroke:0;line-height:11.21px">79</div>
<div class="t" style="left:28.7px;top:227.20px;line-height:11.21px"><span style="color:#000">Environment.Default.Foo.Bar.Hidden.Key.Name.xalue=</span><span style="color:#2a00ff"></span></div>
<div class="t" style="left:0;top:238.41px;width:26.5px;text-align:right;color:#787878;-webkit-text-stroke:0;line-height:11.21px">80</div>
<div class="t" style="left:28.7px;top:238.41px;line-height:11.21px"><span style="color:#000">Environment.Default.Foo.Bar.Hidden.Key.Name.xyValue=</span><span style="color:#2a00ff"></span></div>
<div class="t" style="left:0;top:249.62px;width:26.5px;text-align:right;color:#787878;-webkit-text-stroke:0;line-height:11.21px">81</div>
<div class="t" style="left:28.7px;top:249.62px;line-height:11.21px"><span style="color:#000">Environment.Default.Foo.Bar.Hidden.Key.Name.x=</span><span style="color:#2a00ff">9999-12-31</span></div>
<div class="t" style="left:0;top:260.83px;width:26.5px;text-align:right;color:#787878;-webkit-text-stroke:0;line-height:11.21px">82</div>
<div class="t" style="left:28.7px;top:260.83px;line-height:11.21px"><span style="color:#000">Environment.Default.Foo.Bar.Hidden.Key.Name.x</span><span style="color:#2a00ff">0001-01-01</span></div>
<div class="t" style="left:0;top:272.04px;width:26.5px;text-align:right;color:#787878;-webkit-text-stroke:0;line-height:11.21px">83</div>
<div class="t" style="left:28.7px;top:272.04px;line-height:11.21px"><span style="color:#000">Environment.Default.Foo.Bar.Hidden.Key.Name.xe=</span><span style="color:#2a00ff">0001-01-01</span></div>
<div class="t" style="left:0;top:283.25px;width:26.5px;text-align:right;color:#787878;-webkit-text-stroke:0;line-height:11.21px">84</div>
<div class="t" style="left:28.7px;top:283.25px;line-height:11.21px"><span style="color:#000">Environment.Default.Foo.Bar.Hidden.Key.Name.xlue=</span><span style="color:#2a00ff">0001-01-02</span></div>
<div class="t" style="left:0;top:294.46px;width:26.5px;text-align:right;color:#787878;-webkit-text-stroke:0;line-height:11.21px">85</div>
<div class="t" style="left:28.7px;top:294.46px;line-height:11.21px"><span style="color:#000">Environment.Default.Foo.Bar.Hidden.Key.Name.x </span><span style="color:#2a00ff">23:59:59</span></div>
</div>
<svg class="a" style="left:320.86px;top:101.00px;overflow:visible" width="20.93" height="3"><polyline points="0.00,0.5 1.50,2.2 3.00,0.5 4.50,2.2 6.00,0.5 7.50,2.2 9.00,0.5 10.50,2.2 12.00,0.5 13.50,2.2 15.00,0.5 16.50,2.2 18.00,0.5 19.50,2.2" fill="none" stroke="#f06a50" stroke-width="0.8" opacity="0.85"/></svg>
<svg class="a" style="left:770.86px;top:134.63px;overflow:visible" width="41.86" height="3"><polyline points="0.00,0.5 1.50,2.2 3.00,0.5 4.50,2.2 6.00,0.5 7.50,2.2 9.00,0.5 10.50,2.2 12.00,0.5 13.50,2.2 15.00,0.5 16.50,2.2 18.00,0.5 19.50,2.2 21.00,0.5 22.50,2.2 24.00,0.5 25.50,2.2 27.00,0.5 28.50,2.2 30.00,0.5 31.50,2.2 33.00,0.5 34.50,2.2 36.00,0.5 37.50,2.2 39.00,0.5 40.50,2.2" fill="none" stroke="#f06a50" stroke-width="0.8" opacity="0.85"/></svg>
<svg class="a" style="left:587.72px;top:157.05px;overflow:visible" width="47.09" height="3"><polyline points="0.00,0.5 1.50,2.2 3.00,0.5 4.50,2.2 6.00,0.5 7.50,2.2 9.00,0.5 10.50,2.2 12.00,0.5 13.50,2.2 15.00,0.5 16.50,2.2 18.00,0.5 19.50,2.2 21.00,0.5 22.50,2.2 24.00,0.5 25.50,2.2 27.00,0.5 28.50,2.2 30.00,0.5 31.50,2.2 33.00,0.5 34.50,2.2 36.00,0.5 37.50,2.2 39.00,0.5 40.50,2.2 42.00,0.5 43.50,2.2 45.00,0.5 46.50,2.2" fill="none" stroke="#f06a50" stroke-width="0.8" opacity="0.85"/></svg>
<svg class="a" style="left:666.21px;top:157.05px;overflow:visible" width="36.63" height="3"><polyline points="0.00,0.5 1.50,2.2 3.00,0.5 4.50,2.2 6.00,0.5 7.50,2.2 9.00,0.5 10.50,2.2 12.00,0.5 13.50,2.2 15.00,0.5 16.50,2.2 18.00,0.5 19.50,2.2 21.00,0.5 22.50,2.2 24.00,0.5 25.50,2.2 27.00,0.5 28.50,2.2 30.00,0.5 31.50,2.2 33.00,0.5 34.50,2.2 36.00,0.5" fill="none" stroke="#f06a50" stroke-width="0.8" opacity="0.85"/></svg>
<svg class="a" style="left:530.16px;top:179.47px;overflow:visible" width="20.93" height="3"><polyline points="0.00,0.5 1.50,2.2 3.00,0.5 4.50,2.2 6.00,0.5 7.50,2.2 9.00,0.5 10.50,2.2 12.00,0.5 13.50,2.2 15.00,0.5 16.50,2.2 18.00,0.5 19.50,2.2" fill="none" stroke="#f06a50" stroke-width="0.8" opacity="0.85"/></svg>
<svg class="a" style="left:582.49px;top:201.89px;overflow:visible" width="20.93" height="3"><polyline points="0.00,0.5 1.50,2.2 3.00,0.5 4.50,2.2 6.00,0.5 7.50,2.2 9.00,0.5 10.50,2.2 12.00,0.5 13.50,2.2 15.00,0.5 16.50,2.2 18.00,0.5 19.50,2.2" fill="none" stroke="#f06a50" stroke-width="0.8" opacity="0.85"/></svg>
<svg class="a" style="left:561.56px;top:257.94px;overflow:visible" width="10.46" height="3"><polyline points="0.00,0.5 1.50,2.2 3.00,0.5 4.50,2.2 6.00,0.5 7.50,2.2 9.00,0.5" fill="none" stroke="#f06a50" stroke-width="0.8" opacity="0.85"/></svg>
<svg class="a" style="left:577.25px;top:257.94px;overflow:visible" width="20.93" height="3"><polyline points="0.00,0.5 1.50,2.2 3.00,0.5 4.50,2.2 6.00,0.5 7.50,2.2 9.00,0.5 10.50,2.2 12.00,0.5 13.50,2.2 15.00,0.5 16.50,2.2 18.00,0.5 19.50,2.2" fill="none" stroke="#f06a50" stroke-width="0.8" opacity="0.85"/></svg>
<svg class="a" style="left:587.72px;top:280.36px;overflow:visible" width="10.46" height="3"><polyline points="0.00,0.5 1.50,2.2 3.00,0.5 4.50,2.2 6.00,0.5 7.50,2.2 9.00,0.5" fill="none" stroke="#f06a50" stroke-width="0.8" opacity="0.85"/></svg>
<svg class="a" style="left:603.42px;top:280.36px;overflow:visible" width="20.93" height="3"><polyline points="0.00,0.5 1.50,2.2 3.00,0.5 4.50,2.2 6.00,0.5 7.50,2.2 9.00,0.5 10.50,2.2 12.00,0.5 13.50,2.2 15.00,0.5 16.50,2.2 18.00,0.5 19.50,2.2" fill="none" stroke="#f06a50" stroke-width="0.8" opacity="0.85"/></svg>
<svg class="a" style="left:577.25px;top:291.57px;overflow:visible" width="20.93" height="3"><polyline points="0.00,0.5 1.50,2.2 3.00,0.5 4.50,2.2 6.00,0.5 7.50,2.2 9.00,0.5 10.50,2.2 12.00,0.5 13.50,2.2 15.00,0.5 16.50,2.2 18.00,0.5 19.50,2.2" fill="none" stroke="#f06a50" stroke-width="0.8" opacity="0.85"/></svg>
<svg class="a" style="left:603.42px;top:291.57px;overflow:visible" width="26.16" height="3"><polyline points="0.00,0.5 1.50,2.2 3.00,0.5 4.50,2.2 6.00,0.5 7.50,2.2 9.00,0.5 10.50,2.2 12.00,0.5 13.50,2.2 15.00,0.5 16.50,2.2 18.00,0.5 19.50,2.2 21.00,0.5 22.50,2.2 24.00,0.5 25.50,2.2" fill="none" stroke="#f06a50" stroke-width="0.8" opacity="0.85"/></svg>
<div class="a" style="left:265px;top:406.5px;width:692px;height:143px;background:#fff;border:1px solid #a6a6a6;border-top-color:#b8b8b8;border-radius:3px 3px 0 0"></div>
<div class="a" style="left:266px;top:407.5px;width:690px;height:17px;background:#ececec;border-bottom:1px solid #c4c4c4;border-radius:2px 2px 0 0"></div>
<div class="a" style="left:266px;top:425px;width:690px;height:17px;background:#ececec"></div>
<div class="t" style="left:530.5px;top:411.5px">rer</div>
<div class="a" style="left:544px;top:408px;width:1px;height:16px;background:#c4c4c4"></div>
<svg class="a" style="left:549px;top:410px" width="12" height="12" viewBox="0 0 12 12"><rect x="1.5" y="0.5" width="8" height="10" fill="#fafafa" stroke="#8a9ab8"/><path d="M3 8L5 5L7 7L9 4" stroke="#e04040" fill="none"/><rect x="2" y="8.5" width="7" height="1.5" fill="#7ab0e0"/></svg>
<div class="t" style="left:562.6px;top:411.5px">Snippets</div>
<div class="a" style="left:599px;top:408px;width:1px;height:16px;background:#c4c4c4"></div>
<svg class="a" style="left:604px;top:410px" width="12" height="12" viewBox="0 0 12 12"><rect x="0.5" y="0.5" width="10" height="8" rx="1" fill="#3a6ab8" stroke="#234a90"/><rect x="2" y="2" width="7" height="5" fill="#e8f0fa"/><rect x="3" y="9" width="5" height="2" fill="#3a6ab8"/></svg>
<div class="t" style="left:617.3px;top:411.5px">Console</div>
<div class="a" style="left:652px;top:408px;width:1px;height:16px;background:#c4c4c4"></div>
<svg class="a" style="left:656.5px;top:410px" width="12" height="12" viewBox="0 0 12 12"><rect x="0.5" y="1.5" width="9" height="7" fill="#dfe8f0" stroke="#7a9a70"/><rect x="1.5" y="2.5" width="5" height="2" fill="#4aa040"/><circle cx="9" cy="8.5" r="2.8" fill="#2a9a3a"/></svg>
<div class="t" style="left:670.5px;top:411.5px">Progress</div>
<div class="a" style="left:706px;top:408px;width:1px;height:16px;background:#c4c4c4"></div>
<svg class="a" style="left:710px;top:410px" width="12" height="12" viewBox="0 0 12 12"><path d="M1 10L4 6L9 1L11 3L6 8Z" fill="#e8b040" stroke="#a07018" stroke-width="0.8"/><path d="M1 10L4 6L6 8Z" fill="#888"/></svg>
<div class="t" style="left:725px;top:411.5px">Search</div>
<div class="a" style="left:754px;top:408px;width:1px;height:16px;background:#c4c4c4"></div>
<svg class="a" style="left:758px;top:410px" width="12" height="12" viewBox="0 0 12 12"><ellipse cx="5.5" cy="6" rx="3" ry="3.5" fill="#7ac043" stroke="#2e6a24"/><path d="M0 3L2.5 4.5M11 3L8.5 4.5M0 6.5H2M11 6.5H9M0.5 10.5L2.5 8.5M10.5 10.5L8.5 8.5M3 0.5L4 2.5M8 0.5L7 2.5" stroke="#333" stroke-width="0.9"/></svg>
<div class="t" style="left:772.4px;top:411.5px">Debug</div>
<div class="a" style="left:800px;top:408px;width:1px;height:16px;background:#c4c4c4"></div>
<svg class="a" style="left:805px;top:410px" width="12" height="12" viewBox="0 0 12 12"><circle cx="3" cy="3.5" r="2.6" fill="#3a6aa8"/><circle cx="8" cy="7.5" r="2.8" fill="#3a6aa8"/></svg>
<div class="t" style="left:819.4px;top:411.5px">Breakpoints</div>
<div class="a" style="left:868px;top:408px;width:1px;height:16px;background:#c4c4c4"></div>
<svg class="a" style="left:268px;top:410px" width="11" height="12" viewBox="0 0 11 12"><rect x="0.5" y="0.5" width="10" height="11" fill="#eef2f8" stroke="#8a9ab8"/><circle cx="3.5" cy="3.5" r="2.2" fill="#e02020"/><rect x="2" y="7" width="3" height="3" fill="#f0a020"/><path d="M7 2V9" stroke="#7a8aa8"/></svg>
<div class="t" style="left:283px;top:411.5px;font-size:9.5px">M</div>
<div class="a" style="left:924px;top:411px;width:8px;height:3.5px;border:1px solid #555;background:#fff"></div>
<div class="a" style="left:941px;top:411px;width:8px;height:8px;border:1px solid #555;border-top-width:2px;background:#fff"></div>
<svg class="a" style="left:835.5px;top:429px" width="10" height="10" viewBox="0 0 10 10"><rect x="2.5" y="0.5" width="7" height="7" fill="#dbe8f6" stroke="#8aa4c8"/><rect x="0.5" y="2.5" width="7" height="7" fill="#eef4fb" stroke="#6e8ab4"/><rect x="2" y="5.5" width="4" height="1.2" fill="#3b5f98"/></svg>
<svg class="a" style="left:852px;top:428px" width="12" height="12" viewBox="0 0 11 12"><ellipse cx="5.5" cy="6" rx="3" ry="3.5" fill="#7ac043" stroke="#2e6a24"/><path d="M0 3L2.5 4.5M11 3L8.5 4.5M0 6.5H2M11 6.5H9M0.5 10.5L2.5 8.5M10.5 10.5L8.5 8.5M3 0.5L4 2.5M8 0.5L7 2.5" stroke="#333" stroke-width="0.9"/></svg>
<svg class="a" style="left:869px;top:428.5px" width="11" height="11" viewBox="0 0 11 11"><circle cx="5.5" cy="5.5" r="5.4" fill="#2c8a34"/><circle cx="5.5" cy="5.5" r="4" fill="#48b048"/><path d="M4 2.8L8.2 5.5L4 8.2Z" fill="#fff"/></svg>
<svg class="a" style="left:886px;top:428px" width="12" height="12" viewBox="0 0 12 12"><path d="M0.5 6V11.5L5 9Z" fill="#2a9a3a"/><circle cx="6" cy="5" r="3" fill="none" stroke="#2a68b8" stroke-width="1.2"/><path d="M6 3.5V5.5" stroke="#2a68b8"/><path d="M9 0.5H12M10 2H12" stroke="#5a8ad0" stroke-width="0.8"/></svg>
<div class="a" style="left:905px;top:430px;width:9px;height:8px;background:#d8b0b0;border:1px solid #c8a8a8"></div>
<svg class="a" style="left:921px;top:428px" width="11" height="12" viewBox="0 0 12 12"><rect x="0.5" y="2.5" width="5" height="8" fill="#eef4ea" stroke="#7a8a70"/><rect x="1.5" y="3.5" width="3" height="2" fill="#4aa040"/><rect x="6.5" y="0.5" width="4" height="6" fill="#fff" stroke="#b8a060"/></svg>
<svg class="a" style="left:944px;top:430.5px" width="8" height="6" viewBox="0 0 8 6"><path d="M0.7 0.7H7.3L4 5Z" fill="#fff" stroke="#555" stroke-width="0.9"/></svg>
<div class="a" style="left:283px;top:442.5px;width:242px;height:13.5px;background:#cce8ff;border:1px solid #99d1ff"></div>
<svg class="a" style="left:274px;top:446.5px" width="6" height="6" viewBox="0 0 6 6"><path d="M5.5 0.5V5.5H0.5Z" fill="#222"/></svg>
<svg class="a" style="left:287px;top:443.5px" width="11" height="13" viewBox="0 0 11 13"><rect x="0.5" y="0.5" width="7" height="10" fill="#eef4ea" stroke="#7a8a70"/><rect x="1.5" y="1.5" width="5" height="2" fill="#4aa040"/><rect x="1.5" y="5" width="5" height="2" fill="#d8e0d8"/><circle cx="8.5" cy="10" r="2.5" fill="#3a5ab0"/></svg>
<div class="t" style="left:301.3px;top:445.5px">Tomcat v8.0 Server at localhost  [Stopped, Synchronized]</div>
<svg class="a" style="left:289.5px;top:459.5px" width="5" height="7" viewBox="0 0 5 7"><path d="M0.5 0.7L4.3 3.5L0.5 6.3Z" fill="#fff" stroke="#a2a2a2" stroke-width="0.9"/></svg>
<svg class="a" style="left:299.5px;top:456.5px" width="11" height="12" viewBox="0 0 11 12"><rect x="1.5" y="0.5" width="6" height="2" fill="#f0c860" stroke="#b08a30" stroke-width="0.6"/><rect x="0.5" y="2.5" width="8" height="8" rx="1" fill="#e8eef8" stroke="#7a8ab0"/><circle cx="8" cy="9" r="2.8" fill="#3a80c0"/><path d="M6.5 8.5Q8 7.5 9.5 9.5" stroke="#7ac050" stroke-width="1.2" fill="none"/></svg>
<div class="t" style="left:314.7px;top:458.5px">RosedorWeb <span style="color:#8a7442">[Synchronized]</span></div>
<div class="a" style="left:0;top:549px;width:957px;height:19px;background:#ececec"></div>
<div class="a" style="left:0;top:568px;width:943px;height:1px;background:#8aa5ad"></div>
<svg class="a" style="left:5px;top:551px" width="10" height="12" viewBox="0 0 10 12"><rect x="0.5" y="0.5" width="6" height="10" fill="#eef4ea" stroke="#7a8a70"/><rect x="1.5" y="1.5" width="4" height="2" fill="#4aa040"/><rect x="1.5" y="5" width="4" height="1.5" fill="#cfd8cf"/><rect x="5" y="7" width="5" height="5" rx="1" fill="#3a5ab0"/></svg>
<div class="t" style="left:18px;top:554px">1 item selected</div>
<svg class="a" style="left:865px;top:551px" width="13" height="13" viewBox="0 0 13 13"><rect x="6" y="0.5" width="6.5" height="12" fill="#2a2a2a"/><circle cx="4" cy="4" r="3" fill="#555"/><ellipse cx="4.5" cy="10" rx="4" ry="2.5" fill="#777"/></svg>
<div class="t" style="left:880px;top:554.5px">Sign in to Google...</div>
<div class="a" style="left:291.5px;top:140.2px;width:239.70000000000005px;height:311.0px;background:#eeeeee;border:1px solid #c4c4c4;border-right-color:#a8a8a8;border-bottom-color:#a8a8a8"></div>
<div class="a" style="left:314px;top:141.2px;width:1px;height:309.0px;background:#e0e0e0"></div>
<div class="t" style="left:318px;top:146.95px;color:#1a1a1a">New</div>
<svg class="a" style="left:519.3px;top:148.40px" width="4" height="6" viewBox="0 0 4 6"><path d="M0.2 0.3L3.8 3L0.2 5.7Z" fill="#111"/></svg>
<div class="t" style="left:318px;top:163.35px;color:#1a1a1a">Open</div>
<div class="t" style="left:400px;width:116px;text-align:right;top:163.35px;color:#1a1a1a">F3</div>
<div class="t" style="left:318px;top:179.75px;color:#1a1a1a">Show In</div>
<div class="t" style="left:400px;width:116px;text-align:right;top:179.75px;color:#1a1a1a">Alt+Shift+W</div>
<svg class="a" style="left:519.3px;top:181.20px" width="4" height="6" viewBox="0 0 4 6"><path d="M0.2 0.3L3.8 3L0.2 5.7Z" fill="#111"/></svg>
<div class="a" style="left:315px;top:194.80px;width:212px;height:1px;background:#d7d7d7"></div>
<div class="a" style="left:315px;top:195.80px;width:212px;height:1px;background:#fafafa"></div>
<div class="t" style="left:318px;top:201.75px;color:#1a1a1a">Copy</div>
<div class="t" style="left:400px;width:116px;text-align:right;top:201.75px;color:#1a1a1a">Ctrl+C</div>
<svg class="a" style="left:297px;top:198.70px" width="12" height="12" viewBox="0 0 12 12"><rect x="0.5" y="0.5" width="7" height="8" fill="#dfe6f0" stroke="#8a9ab8"/><rect x="3.5" y="3.5" width="7" height="8" fill="#f4f7fb" stroke="#6a86b0"/><path d="M5 6H9M5 8H9" stroke="#8aa0c8" stroke-width="0.8"/></svg>
<div class="t" style="left:318px;top:218.15px;color:#a0a0a0">Paste</div>
<div class="t" style="left:400px;width:116px;text-align:right;top:218.15px;color:#a0a0a0">Ctrl+V</div>
<svg class="a" style="left:297px;top:215.10px" width="12" height="12" viewBox="0 0 12 12"><rect x="0.5" y="1.5" width="8" height="9" fill="#e2e2e2" stroke="#c6c6c6"/><rect x="4.5" y="5.5" width="6" height="6" fill="#f2f2f2" stroke="#c8c8c8"/></svg>
<div class="t" style="left:318px;top:234.55px;color:#1a1a1a">Delete</div>
<div class="t" style="left:400px;width:116px;text-align:right;top:234.55px;color:#1a1a1a">Delete</div>
<svg class="a" style="left:297px;top:231.50px" width="12" height="12" viewBox="0 0 12 12"><path d="M1.5 2L9.5 10M9.5 2L1.5 10" stroke="#e03030" stroke-width="2.6" stroke-linecap="round"/></svg>
<div class="t" style="left:318px;top:250.95px;color:#1a1a1a">Rename</div>
<div class="t" style="left:400px;width:116px;text-align:right;top:250.95px;color:#1a1a1a">F2</div>
<div class="a" style="left:315px;top:266.00px;width:212px;height:1px;background:#d7d7d7"></div>
<div class="a" style="left:315px;top:267.00px;width:212px;height:1px;background:#fafafa"></div>
<div class="t" style="left:318px;top:272.95px;color:#1a1a1a">Debug</div>
<div class="t" style="left:400px;width:116px;text-align:right;top:272.95px;color:#1a1a1a">Ctrl+Alt+D</div>
<svg class="a" style="left:297px;top:269.90px" width="12" height="12" viewBox="0 0 12 12"><ellipse cx="5.5" cy="6" rx="3.2" ry="3.7" fill="#7ac043" stroke="#2e6a24"/><path d="M0 3L2.5 4.5M11 3L8.5 4.5M0 6.5H2M11 6.5H9M0.5 10.5L2.5 8.5M10.5 10.5L8.5 8.5M3 0.5L4 2.5M8 0.5L7 2.5" stroke="#333" stroke-width="0.9"/></svg>
<div class="t" style="left:318px;top:289.35px;color:#1a1a1a">Start</div>
<div class="t" style="left:400px;width:116px;text-align:right;top:289.35px;color:#1a1a1a">Ctrl+Alt+R</div>
<svg class="a" style="left:297px;top:286.30px" width="12" height="12" viewBox="0 0 12 12"><circle cx="5.5" cy="5.5" r="5.4" fill="#2c8a34"/><circle cx="5.5" cy="5.5" r="4" fill="#48b048"/><path d="M4 2.8L8.2 5.5L4 8.2Z" fill="#fff"/></svg>
<div class="t" style="left:318px;top:305.75px;color:#1a1a1a">Profile</div>
<svg class="a" style="left:297px;top:302.70px" width="12" height="12" viewBox="0 0 12 12"><path d="M0.5 6V11.5L5 9Z" fill="#2a9a3a"/><circle cx="6" cy="5" r="3" fill="none" stroke="#2a68b8" stroke-width="1.2"/><path d="M6 3.5V5.5" stroke="#2a68b8"/><path d="M9 0.5H12M10 2H12" stroke="#5a8ad0" stroke-width="0.8"/></svg>
<div class="t" style="left:318px;top:322.15px;color:#a0a0a0">Stop</div>
<div class="t" style="left:400px;width:116px;text-align:right;top:322.15px;color:#a0a0a0">Ctrl+Alt+S</div>
<svg class="a" style="left:297px;top:319.10px" width="12" height="12" viewBox="0 0 12 12"><rect x="1.5" y="2" width="8" height="8" fill="#b0b0b0" stroke="#a8a8a8"/></svg>
<div class="t" style="left:318px;top:338.55px;color:#1a1a1a">Publish</div>
<div class="t" style="left:400px;width:116px;text-align:right;top:338.55px;color:#1a1a1a">Ctrl+Alt+P</div>
<svg class="a" style="left:297px;top:335.50px" width="12" height="12" viewBox="0 0 12 12"><rect x="0.5" y="2.5" width="5" height="8" fill="#eef4ea" stroke="#7a8a70"/><rect x="1.5" y="3.5" width="3" height="2" fill="#4aa040"/><rect x="6.5" y="0.5" width="4" height="6" fill="#fff" stroke="#b8a060"/></svg>
<div class="t" style="left:318px;top:354.95px;color:#1a1a1a">Clean...</div>
<div class="a" style="left:315px;top:370.00px;width:212px;height:1px;background:#d7d7d7"></div>
<div class="a" style="left:315px;top:371.00px;width:212px;height:1px;background:#fafafa"></div>
<div class="t" style="left:318px;top:376.95px;color:#1a1a1a">Add and Remove...</div>
<svg class="a" style="left:297px;top:373.90px" width="12" height="12" viewBox="0 0 12 12"><rect x="0.5" y="0.5" width="4" height="7" fill="#eef4ea" stroke="#7a8a70"/><rect x="1" y="1" width="3" height="1.5" fill="#4aa040"/><path d="M3 5.5H11L10 11.5H4Z" fill="#88b4e8" stroke="#3a6aa8" stroke-width="0.8"/></svg>
<div class="t" style="left:318px;top:393.35px;color:#1a1a1a">Monitoring</div>
<svg class="a" style="left:519.3px;top:394.80px" width="4" height="6" viewBox="0 0 4 6"><path d="M0.2 0.3L3.8 3L0.2 5.7Z" fill="#111"/></svg>
<div class="a" style="left:315px;top:408.40px;width:212px;height:1px;background:#d7d7d7"></div>
<div class="a" style="left:315px;top:409.40px;width:212px;height:1px;background:#fafafa"></div>
<div class="t" style="left:318px;top:415.35px;color:#1a1a1a">Clean Tomcat Work Directory...</div>
<div class="a" style="left:315px;top:430.40px;width:212px;height:1px;background:#d7d7d7"></div>
<div class="a" style="left:315px;top:431.40px;width:212px;height:1px;background:#fafafa"></div>
<div class="t" style="left:318px;top:437.35px;color:#1a1a1a">Properties</div>
<div class="t" style="left:400px;width:116px;text-align:right;top:437.35px;color:#1a1a1a">Alt+Enter</div>
<svg class="a" style="left:341px;top:285px" width="59" height="16" viewBox="0 0 59 16"><path d="M0.4 7.9L11 0.3V4H58.1V11.7H11V15.3Z" fill="#ff0000"/></svg>
<div class="a" style="left:0;top:72px;width:855px;height:1px;background:#222"></div>
<div class="a" style="left:855px;top:72px;width:84px;height:1px;background:#c8c8c8"></div>
<div class="a" style="left:939px;top:72px;width:18px;height:1px;background:#222"></div>

</body></html>
